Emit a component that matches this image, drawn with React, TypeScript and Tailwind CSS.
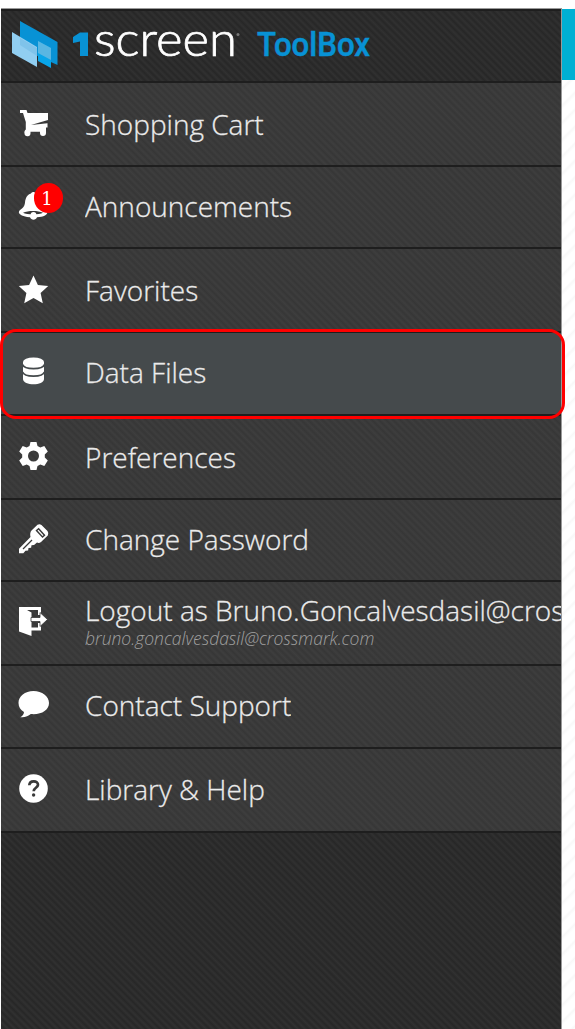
import React from "react";

const TEXTURE_LIGHT =
  "bg-[#393939] bg-[repeating-linear-gradient(45deg,rgba(255,255,255,0.025)_0px,rgba(0,0,0,0.05)_2.5px,rgba(255,255,255,0.025)_5px)]";
const TEXTURE_DARK =
  "bg-[#2a2a2a] bg-[repeating-linear-gradient(45deg,rgba(255,255,255,0.03)_0px,rgba(0,0,0,0.08)_2.5px,rgba(255,255,255,0.03)_5px)]";

const CartIcon = () => (
  <path d="M2 3h6.500l1 3H30v7L13 18l16.500-1.700v4.200H28v5.500a3 3 0 0 1-6 0v-1.200h-9.500V26a3 3 0 0 1-6 .5c-.4-2 .2-3 1.300-4V15L5 6H2z" />
);
const BellIcon = () => (
  <>
    <path d="M13 3.500c1-2 4-2 4.500 0 4.500 1.300 6 5 6.500 9.500.3 4 2 5.500 4.500 7.500 1.500 1.500 1.200 3.500-1.500 5-2 1-5 1.600-8 1.800-1 3.200-6 3.200-7 0-4-.2-8-1.200-10-3-2-2-1-3.500.7-4.800 3-2 3.800-3.500 4.300-7 .5-4.500 2-7.700 6-9z" />
    <path d="M5 22.800c5-2.500 15-2.500 20 0-4 2-16 2-20 0z" fill="#393939" />
    <circle cx="15.500" cy="25" r="2.900" />
  </>
);
const StarIcon = () => (
  <path d="M15.500 1.500l4.400 9.500 10.300 1.100-7.600 6.900 2.200 10.200-9.300-5.200-9.300 5.200 2.200-10.200L.8 12.100 11.100 11z" />
);
const DataIcon = () => (
  <>
    <path d="M5 6v17c0 7 21 7 21 0V6z" />
    <ellipse cx="15.500" cy="6" rx="10.500" ry="4.500" />
    <path d="M4.500 8.500c2 5.500 20 5.500 22 0M4.500 16c2 5.500 20 5.500 22 0" fill="none" stroke="#454a4c" strokeWidth="1.800" />
  </>
);
const GearIcon = () => (
  <path
    fillRule="evenodd"
    d="M12.500 2h6l1 4 2.800 1.500 4-1.500 3.500 5.500-3 3v3l3 3-3.500 5.500-4-1.500-2.800 1.500-1 4h-6l-1-4-2.800-1.500-4 1.500-3.500-5.500 3-3v-3l-3-3L4.700 6l4 1.500L11.500 6zM15.500 10.500a5.500 5.500 0 1 0 0 11 5.500 5.500 0 0 0 0-11z"
  />
);
const KeyIcon = () => (
  <>
    <path d="M13.500 7.500 19.500 1.800q2-1.300 4 .2l6 6q1.500 2 .3 4.500L23 19q-2 1.500-4 .5L16 22l-2.500.2-.4 2.600-2.600.2-.4 2.600-2.600.2-2.200 2.400H1v-4.400L12.500 14q-1-4 1-6.500z" />
    <path d="m17.500 7.500 3.200-2.700 6.800 7.500-3 2.700z" fill="#393939" />
    <path d="m19.500 7.500 1-.8 5 5.500-1 .8z" />
    <path d="m5 26 9-9" stroke="#393939" strokeWidth="1.200" />
  </>
);
const ExitIcon = () => (
  <>
    <path d="M1 2h22v8h-3V5H9l4.500 2.500V31L1 26.500z" />
    <path d="M23 18v7.500H12v-3h8V18z" />
    <path d="M13 12.500h9V7.500l7.500 7-7.500 7v-5h-9z" stroke="#393939" strokeWidth="0.800" />
  </>
);
const ChatIcon = () => (
  <path d="M15.500 2C7 2 .5 7 .5 14c0 4 2 7 5.500 9-.2 2.500-1.500 4-3.700 5.200 4.500.5 8-1 10.500-3.200C23 26 31 21.500 31 14 31 7 24 2 15.500 2z" />
);
const HelpIcon = () => (
  <>
    <circle cx="15.500" cy="15.500" r="14.300" />
    <path d="M11.300 12.300c.3-5.500 9-5 8.700-.4-.2 3-4.300 2.800-4.300 6.300" fill="none" stroke="#393939" strokeWidth="2.700" />
    <circle cx="15.600" cy="22" r="1.700" fill="#393939" />
  </>
);

type Item = {
  label: string;
  icon: () => React.JSX.Element;
  height: string;
  textPad: string;
  iconPad: string;
  sub?: string;
  badge?: string;
  active?: boolean;
};

const items: Item[] = [
  { label: "Shopping Cart", icon: CartIcon, height: "h-[84px]", textPad: "pt-[22px]", iconPad: "pt-[24px]" },
  { label: "Announcements", icon: BellIcon, height: "h-[82px]", textPad: "pt-[20px]", iconPad: "pt-[23px]", badge: "1" },
  { label: "Favorites", icon: StarIcon, height: "h-[84px]", textPad: "pt-[22px]", iconPad: "pt-[25px]" },
  { label: "Data Files", icon: DataIcon, height: "h-[83px]", textPad: "pt-[20px]", iconPad: "pt-[23px]", active: true },
  { label: "Preferences", icon: GearIcon, height: "h-[84px]", textPad: "pt-[22px]", iconPad: "pt-[24px]" },
  { label: "Change Password", icon: KeyIcon, height: "h-[82px]", textPad: "pt-[20px]", iconPad: "pt-[23px]" },
  {
    label: "Logout as Bruno.Goncalvesdasil@crossmark.com",
    icon: ExitIcon,
    height: "h-[84px]",
    textPad: "pt-[9px]",
    iconPad: "pt-[23px]",
    sub: "bruno.goncalvesdasil@crossmark.com",
  },
  { label: "Contact Support", icon: ChatIcon, height: "h-[83px]", textPad: "pt-[20px]", iconPad: "pt-[23px]" },
  { label: "Library & Help", icon: HelpIcon, height: "h-[84px]", textPad: "pt-[21px]", iconPad: "pt-[24px]" },
];

function Logo() {
  return (
    <svg width="400" height="70" viewBox="0 0 400 70" role="img" aria-label="1screen ToolBox">
      <path d="M19 10 56.500 31v23L19 37z" fill="#0892d5" />
      <path d="m37 30 13 7v20l-13-7z" fill="#08a5e9" />
      <path d="m37 30 13 7v12l-13-7z" fill="#59b6e2" />
      <path d="m11 21 25 15v20L11 42z" fill="#91cef1" />
      <path d="m19 27 17 10v8L19 34z" fill="#7fc3ea" />
      <path d="M79 21.500h8V45h-8V30.500l-7 1.500v-6z" fill="#0892d5" />
      <text
        x="93"
        y="45"
        fontFamily="Lato, sans-serif"
        fontWeight="300"
        fontSize="47"
        fill="#fff"
        stroke="#fff"
        strokeWidth="0.700"
        textLength="143"
        lengthAdjust="spacingAndGlyphs"
      >
        screen
      </text>
      <circle cx="237" cy="23.500" r="1.500" fill="#777" />
      <text
        x="256"
        y="45"
        fontFamily="Roboto, sans-serif"
        fontWeight="500"
        fontSize="32.500"
        fill="#0892d5"
        stroke="#0892d5"
        strokeWidth="0.500"
        textLength="113"
        lengthAdjust="spacingAndGlyphs"
      >
        ToolBox
      </text>
    </svg>
  );
}

function MenuRow({ item }: { item: Item }) {
  const Icon = item.icon;
  return (
    <li
      className={`relative flex shrink-0 border-b-2 border-[#1e1e1e] pl-[17px] ${item.height} ${item.active ? "bg-[#454a4c]" : TEXTURE_LIGHT}`}
    >
      <div className={`w-[67px] shrink-0 ${item.iconPad}`}>
        <svg width="32" height="32" viewBox="0 0 32 32" fill="#fff">
          <Icon />
        </svg>
      </div>
      <div className={`min-w-0 overflow-hidden whitespace-nowrap ${item.textPad}`}>
        <div className="text-[28px] leading-[38px] font-light text-[#eee] [-webkit-text-stroke:0.3px_#e4e4e4]">
          {item.label}
        </div>
        {item.sub && (
          <div className="-mt-px text-[17.5px] leading-[20px] font-light text-[#a0a0a0] italic">{item.sub}</div>
        )}
      </div>
      {item.badge && (
        <span className="absolute top-[16px] left-[33px] flex h-[30px] w-[29px] items-center justify-center rounded-full bg-[#f00] pr-[3px] font-['DejaVu_Serif',serif] text-[18px] text-white">
          {item.badge}
        </span>
      )}
      {item.active && (
        <span className="pointer-events-none absolute -top-[4px] -left-px z-10 h-[90px] w-[565px] rounded-[16px] border-3 border-[#f00]" />
      )}
    </li>
  );
}

export default function App() {
  return (
    <div className="flex h-[1029px] w-[575px] flex-col overflow-hidden bg-white pt-[8px] font-['Open_Sans',sans-serif]">
      <div className="flex min-h-0 flex-1">
        <aside className={`ml-px flex w-[561px] shrink-0 flex-col border-t border-r border-[#999] ${TEXTURE_DARK}`}>
          <header className="h-[74px] shrink-0 border-t-2 border-b-2 border-[#1e1e1e]">
            <Logo />
          </header>
          <nav>
            <ul className="flex flex-col">
              {items.map((item) => (
                <MenuRow key={item.label} item={item} />
              ))}
            </ul>
          </nav>
        </aside>
        <main className="flex flex-1 flex-col bg-white bg-[repeating-linear-gradient(135deg,#fff_0px,#fff_7px,#f8f8f8_9px,#fff_12px)]">
          <div className="mt-px h-[71px] bg-[#00b0d3]" />
        </main>
      </div>
    </div>
  );
}
